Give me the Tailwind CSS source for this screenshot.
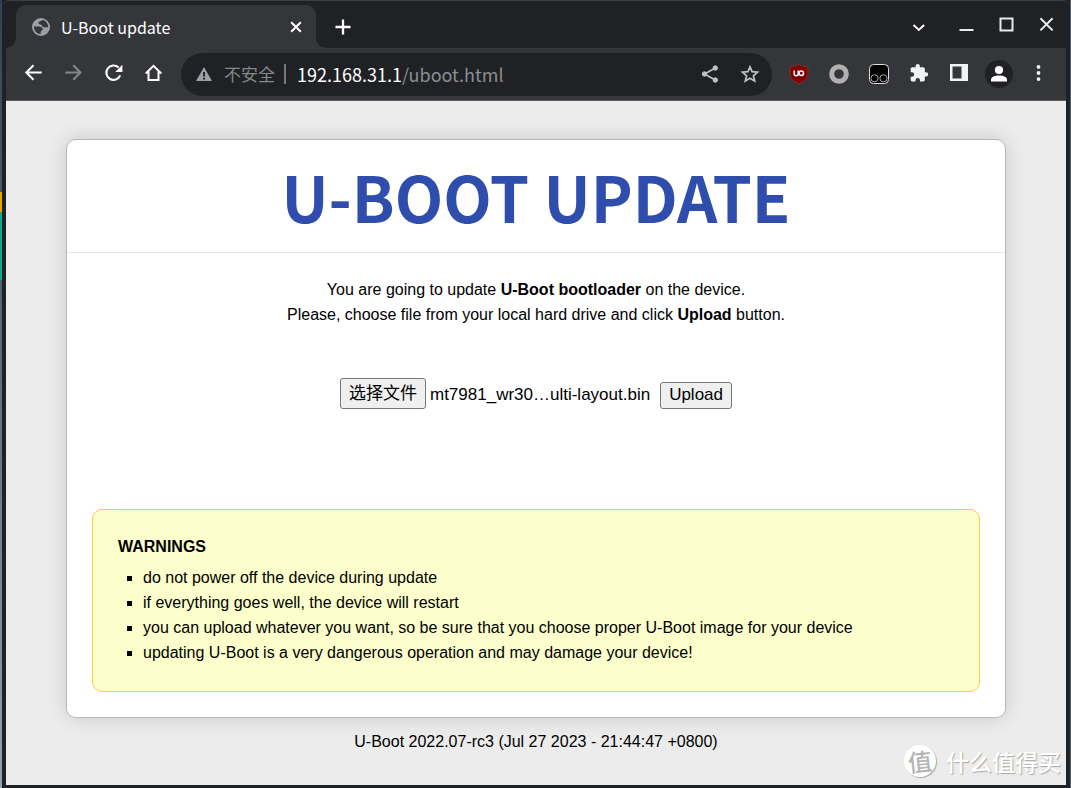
<!DOCTYPE html>
<html lang="zh-CN">
<head>
<meta charset="utf-8">
<meta name="viewport" content="width=device-width, initial-scale=1">
<title>U-Boot update</title>
<script src="https://cdn.jsdelivr.net/npm/@tailwindcss/browser@4"></script>
</head>
<body class="min-h-screen flex bg-[#202124] font-['Liberation_Sans','Noto_Sans_CJK_SC',sans-serif] text-base text-black">

<!-- strip of desktop visible beside the window -->
<div class="w-[2px] shrink-0 flex flex-col bg-linear-to-b from-[#2f444f] to-[#8fa5ad]" aria-hidden="true">
  <div class="h-48"></div>
  <div class="h-5 bg-[#e0a800]"></div>
  <div class="h-17 bg-[#12a98c]"></div>
</div>

<div class="flex-1 min-w-0 flex flex-col border-t border-[#3c4043] rounded-tl-lg rounded-tr-lg bg-[#202124] px-1 pb-[3px]">

  <header class="font-['Noto_Sans_CJK_SC',sans-serif] text-[17px] text-white">
    <!-- tab strip -->
    <div class="h-[47px] flex items-end">
      <svg class="w-[10px] h-[10px] shrink-0" viewBox="0 0 10 10" aria-hidden="true"><path d="M10 0v10H0A10 10 0 0 0 10 0z" fill="#35363a"/></svg>
      <div class="w-[300px] h-[43px] shrink-0 flex items-center bg-[#35363a] rounded-t-[10px] pl-4 pr-3">
        <svg class="w-[18px] h-[18px] shrink-0" viewBox="0 0 18 18" aria-hidden="true">
          <circle cx="9" cy="9" r="9" fill="#9aa0a6"/>
          <path d="M1.900 8.600H6.500C9 8.600 10.800 9.600 10.800 11.200 10.800 12.600 9 12.400 8.800 13.600L8.600 16.100C5 16.100 1.900 13 1.900 8.600z" fill="#35363a"/>
          <path d="M10.400 2C9.400 3.200 6.800 3 6.600 5 6.500 6.400 8.200 6.200 9.200 6.700 10.400 7.400 10.400 9 12 9.300 13.400 9.500 14.600 9 16.100 9.400 16.500 5.400 13.600 2.600 10.400 2z" fill="#35363a"/>
        </svg>
        <span class="flex-1 pl-[11px] text-base leading-6">U-Boot update</span>
        <button class="w-4 h-4 flex items-center justify-center" aria-label="Close tab">
          <svg class="w-[12px] h-[12px]" viewBox="0 0 12 12" fill="none" stroke="#fff" stroke-width="2"><path d="M1.200 1.200l9.600 9.600M10.800 1.200 1.200 10.800"/></svg>
        </button>
      </div>
      <svg class="w-[10px] h-[10px] shrink-0" viewBox="0 0 10 10" aria-hidden="true"><path d="M0 0v10h10A10 10 0 0 1 0 0z" fill="#35363a"/></svg>
      <button class="w-[34px] h-[43px] flex items-center justify-center" aria-label="New tab">
        <svg class="w-4 h-4" viewBox="0 0 16 16" fill="none" stroke="#fff" stroke-width="2.300"><path d="M8 .5v15M.5 8h15"/></svg>
      </button>
      <div class="ml-auto h-[47px] flex items-center">
        <button class="w-10 h-10 flex items-center justify-center" aria-label="Search tabs">
          <svg class="w-5 h-5" viewBox="0 0 20 20" fill="none" stroke="#fff" stroke-width="2"><path d="M5.500 10 10.800 15l5.300-5"/></svg>
        </button>
        <div class="w-2"></div>
        <button class="w-10 h-10 flex items-center justify-center" aria-label="Minimize">
          <svg class="w-5 h-5" viewBox="0 0 20 20" fill="none" stroke="#e8eaed" stroke-width="2"><path d="M3.500 15h14"/></svg>
        </button>
        <button class="w-10 h-10 flex items-center justify-center" aria-label="Maximize">
          <svg class="w-5 h-5" viewBox="0 0 20 20" fill="none" stroke="#e8eaed" stroke-width="2"><path d="M4.500 3.500h12v12h-12z"/></svg>
        </button>
        <button class="w-10 h-10 flex items-center justify-center" aria-label="Close">
          <svg class="w-5 h-5" viewBox="0 0 20 20" fill="none" stroke="#e8eaed" stroke-width="2"><path d="M4.400 3.200l12.200 12.200M16.600 3.200 4.400 15.400"/></svg>
        </button>
      </div>
    </div>

    <!-- toolbar -->
    <div class="h-[53px] flex items-center bg-[#35363a] border-b border-[#5f6064] pl-2 pr-[7px]">
      <button class="w-10 h-10 flex items-center justify-center" aria-label="Back">
        <svg class="w-5 h-5" viewBox="0 0 20 20" fill="none" stroke="#fff" stroke-width="2"><path d="M17.700 8.500H3M9.500 1.300 2.300 8.500l7.200 7.200"/></svg>
      </button>
      <button class="w-10 h-10 flex items-center justify-center" aria-label="Forward">
        <svg class="w-5 h-5" viewBox="0 0 20 20" fill="none" stroke="#85868a" stroke-width="2"><path d="M1.300 8.500H16M9.300 1.300l7.200 7.200-7.200 7.200"/></svg>
      </button>
      <button class="w-10 h-10 flex items-center justify-center" aria-label="Reload">
        <svg class="w-5 h-5" viewBox="0 0 20 20"><path d="M16.200 11.400A7.200 7.200 0 1 1 14.600 3.600" fill="none" stroke="#fff" stroke-width="2.100"/><path d="M18.400 .8v7.200h-7.200z" fill="#fff"/></svg>
      </button>
      <button class="w-10 h-10 flex items-center justify-center" aria-label="Home">
        <svg class="w-5 h-5" viewBox="0 0 20 20" fill="none" stroke="#fff" stroke-width="2"><path d="M1.700 9.500 9.500 1.900l7.800 7.600M4.500 7.500V16h10V7.500"/></svg>
      </button>

      <div class="flex-1 min-w-0 h-[43px] ml-[7px] rounded-full bg-[#202124] flex items-center pl-[15px] pr-3">
        <svg class="w-4 h-4 shrink-0" viewBox="0 0 16 16" aria-hidden="true"><path d="M8 1 16 15H0z" fill="#9aa0a6"/><path d="M7.100 6h1.900v4.500H7.100zM7.100 11.700h1.900v1.800H7.100z" fill="#202124"/></svg>
        <span class="pl-3 text-[#85888c] leading-6">不安全</span>
        <span class="w-[2px] h-5 ml-[9px] bg-[#77797c]"></span>
        <a href="http://192.168.31.1/uboot.html" class="flex-1 pl-[11px] text-lg leading-6 whitespace-nowrap text-[#8b8e92]"><span class="text-white">192.168.31.1</span>/uboot.html</a>
        <button class="w-5 h-5" aria-label="Share">
          <svg class="w-5 h-5" viewBox="0 0 20 20" fill="#bdc1c6" stroke="#bdc1c6"><circle cx="4.500" cy="10" r="2.200"/><circle cx="15.300" cy="4" r="2.200"/><circle cx="15.300" cy="16" r="2.200"/><path d="M15.300 4 4.500 10l10.800 6" fill="none" stroke-width="1.700"/></svg>
        </button>
        <button class="w-5 h-5 ml-5" aria-label="Bookmark this page">
          <svg class="w-5 h-5" viewBox="0 0 20 20" fill="none" stroke="#bdc1c6" stroke-width="1.700"><path d="M10 2.800 12.100 7.700l5.400.5-4.100 3.600 1.300 5.300L10 14.300l-4.700 2.800 1.300-5.300L2.500 8.200l5.400-.5z"/></svg>
        </button>
      </div>

      <div class="flex ml-[7px]">
        <button class="w-10 h-10 flex items-center justify-center" aria-label="uBlock Origin">
          <svg class="w-5 h-5" viewBox="0 0 20 20"><path d="M10 .3c2.600 1.900 5.300 2.400 8.800 2.500V11c0 4-3.600 6.200-8.800 8.700C4.800 17.200 1.200 15 1.200 11V2.800C4.700 2.700 7.400 2.200 10 .3z" fill="#800000" stroke="#a33" stroke-width=".6"/><path d="M5.200 6.500v3.200a2 2 0 0 0 4 0V6.500" fill="none" stroke="#fff" stroke-width="1.500"/><circle cx="12.300" cy="9.200" r="2.200" fill="none" stroke="#fff" stroke-width="1.500"/></svg>
        </button>
        <button class="w-10 h-10 flex items-center justify-center" aria-label="Extension">
          <svg class="w-5 h-5" viewBox="0 0 20 20"><circle cx="10" cy="10" r="7.300" fill="none" stroke="#b0b0b0" stroke-width="5"/></svg>
        </button>
        <button class="w-10 h-10 flex items-center justify-center" aria-label="Tampermonkey">
          <svg class="w-5 h-5" viewBox="0 0 20 20" fill="#000" stroke="#ddd"><rect x=".5" y=".5" width="19" height="19" rx="4" stroke-width="1"/><circle cx="5.500" cy="14.300" r="3.600" stroke="#aaa"/><circle cx="14.500" cy="14.300" r="3.600" stroke="#aaa"/></svg>
        </button>
        <button class="w-10 h-10 flex items-center justify-center" aria-label="Extensions">
          <svg class="w-5 h-5" viewBox="0 0 24 24" fill="#f1f3f4"><path d="M20.500 10H19V6c0-1.100-.9-2-2-2h-4V2.500a2.500 2.500 0 0 0-5 0V4H4c-1.100 0-2 .9-2 2v3.800h1.500a2.700 2.700 0 0 1 0 5.400H2V19c0 1.100.9 2 2 2h3.800v-1.500a2.700 2.700 0 0 1 5.400 0V21H17c1.100 0 2-.9 2-2v-4h1.500a2.500 2.500 0 0 0 0-5z"/></svg>
        </button>
        <button class="w-10 h-10 flex items-center justify-center" aria-label="Side panel">
          <svg class="w-5 h-5" viewBox="0 0 20 20"><path d="M1 0h18v17H1zM3.500 2.500v12h9v-12z" fill="#f1f3f4" fill-rule="evenodd"/></svg>
        </button>
        <button class="w-10 h-10 flex items-center justify-center" aria-label="Profile">
          <svg class="w-7 h-7" viewBox="0 0 28 28"><circle cx="14" cy="14" r="14" fill="#202124"/><circle cx="14" cy="10" r="4.100" fill="#fff"/><path d="M6 21.500v-1.800c0-3 4.500-4.200 8-4.200s8 1.200 8 4.200v1.800z" fill="#fff"/></svg>
        </button>
        <button class="w-10 h-10 flex items-center justify-center" aria-label="Menu">
          <svg class="w-5 h-5" viewBox="0 0 20 20" fill="#f1f3f4"><circle cx="9.500" cy="2.900" r="1.900"/><circle cx="9.500" cy="9" r="1.900"/><circle cx="9.500" cy="15.100" r="1.900"/></svg>
        </button>
      </div>
    </div>
  </header>

  <!-- page -->
  <main class="relative flex-1 bg-[#ececec] px-15 pt-[38px] leading-[25px]">
    <section class="bg-white border border-[#b7b7b7] rounded-[10px] shadow-[0_0_20px_rgba(0,0,0,0.15)]">
      <h1 class="h-[113px] flex items-center justify-center border-b border-[#e6e6e6] font-['Noto_Sans_CJK_SC',sans-serif] font-bold text-[63px] leading-[96px] text-[#2f4dac]">U-BOOT UPDATE</h1>
      <div class="px-[25px] pt-6 pb-[25px]">
        <p class="text-center">You are going to update <strong>U-Boot bootloader</strong> on the device.<br>Please, choose file from your local hard drive and click <strong>Upload</strong> button.</p>
        <form class="flex items-end justify-center mt-[51px] mb-[100px] text-[17px]" onsubmit="return false">
          <button type="button" id="pick" class="h-[31px] px-2 leading-6 bg-[#efefef] border border-[#767676] rounded-[3px]">选择文件</button>
          <label for="pick" class="pl-1 pr-[10px] pb-[2px]">mt7981_wr30…ulti-layout.bin</label>
          <button type="submit" class="h-[27px] px-2 pb-[2px] leading-5 bg-[#efefef] border border-[#767676] rounded-[3px]">Upload</button>
        </form>
        <div class="border border-[#ffca4a] bg-[#fcffcc] rounded-[10px] px-[25px] pt-6 pb-[26px]">
          <strong class="block mb-[6px]">WARNINGS</strong>
          <ul class="list-[square] pl-[25px]">
            <li>do not power off the device during update</li>
            <li>if everything goes well, the device will restart</li>
            <li>you can upload whatever you want, so be sure that you choose proper U-Boot image for your device</li>
            <li>updating U-Boot is a very dangerous operation and may damage your device!</li>
          </ul>
        </div>
      </div>
    </section>
    <p class="text-center mt-[11px]">U-Boot 2022.07-rc3 (Jul 27 2023 - 21:44:47 +0800)</p>

    <!-- watermark over the page corner -->
    <div class="absolute right-[5px] bottom-2 flex items-center gap-[10px] font-['Noto_Sans_CJK_SC',sans-serif] text-white">
      <span class="w-8 h-8 rounded-full bg-white shadow-[1px_1px_1px_#aaa] flex items-center justify-center text-2xl leading-8 font-medium text-[#b5b5b5]"><i class="not-italic -rotate-6">值</i></span>
      <span class="text-[23px] leading-8 font-medium [text-shadow:1px_1px_1px_#aaa]">什么值得买</span>
    </div>
  </main>
</div>
<div class="w-[1px] shrink-0 bg-[#55606a]" aria-hidden="true"></div>
</body>
</html>
